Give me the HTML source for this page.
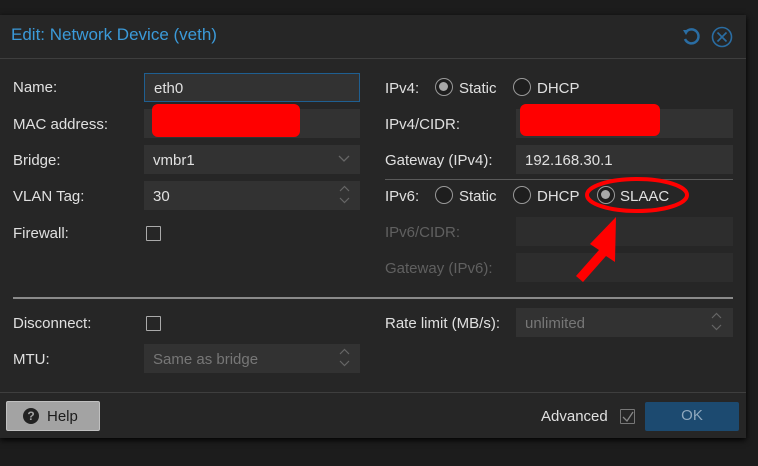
<!DOCTYPE html>
<html><head><style>
*{box-sizing:border-box;margin:0;padding:0}
body{width:758px;height:466px;background:#1c1c1c;font-family:"Liberation Sans",sans-serif;font-size:15px;color:#e0e0e0;position:relative;overflow:hidden}
.dlg{position:absolute;left:0;top:15px;width:746px;height:423px;background:#262626;box-shadow:0 2px 6px #000}
.hdr{position:absolute;left:0;top:0;width:746px;height:44px;border-bottom:1px solid #3e3e3e}
.title{position:absolute;left:11px;top:10px;font-size:17px;color:#3b9ad9}
.a{position:absolute}
.lbl{position:absolute;color:#e0e0e0;margin-top:1px}
.dis{color:#606060}
.f{position:absolute;background:#323232;height:29px;color:#e0e0e0;padding:7px 9px}
.cb{position:absolute;width:15px;height:15px;border:1.5px solid #aaa;border-radius:1px}
.rad{position:absolute;width:18px;height:18px;border-radius:50%;border:1.5px solid #999;background:#1e1e1e;margin-top:-1px}
.rad.on::after{content:"";position:absolute;left:3px;top:3px;width:9px;height:9px;border-radius:50%;background:#a8a8a8}
.red{position:absolute;background:#f00;border-radius:6px}
</style></head><body>
<div class="dlg">
 <div class="hdr"><div class="title">Edit: Network Device (veth)</div>
  <svg class="a" style="left:681px;top:12px" width="20" height="20" viewBox="0 0 20 20"><path d="M5 5 A7 7 0 1 1 4 12" fill="none" stroke="#2a6da3" stroke-width="2.5"/><path d="M2 3 L8 3 L5 8Z" fill="#2a6da3"/></svg>
  <svg class="a" style="left:711px;top:11px" width="22" height="22" viewBox="0 0 22 22"><circle cx="11" cy="11" r="9.5" fill="none" stroke="#2a6da3" stroke-width="1.6"/><path d="M6.5 6.5L15.5 15.5M15.5 6.5L6.5 15.5" stroke="#2a6da3" stroke-width="1.6"/></svg>
 </div>
</div>
<div class="lbl" style="left:13px;top:78px">Name:</div>
<div class="f" style="left:144px;top:73px;width:216px;border:1px solid #1f5f91;padding-top:6px">eth0</div>
<div class="lbl" style="left:13px;top:115px">MAC address:</div>
<div class="f" style="left:144px;top:109px;width:216px"></div>
<div class="red" style="left:152px;top:104px;width:148px;height:33px"></div>
<div class="lbl" style="left:13px;top:151px">Bridge:</div>
<div class="f" style="left:144px;top:145px;width:216px">vmbr1</div>
<svg class="a" style="left:338px;top:155px" width="12" height="8"><path d="M1 1L6 6L11 1" fill="none" stroke="#666" stroke-width="1.3"/></svg>
<div class="lbl" style="left:13px;top:187px">VLAN Tag:</div>
<div class="f" style="left:144px;top:181px;width:216px">30</div>
<svg class="a" style="left:339px;top:185px" width="11" height="20"><path d="M1 6L5.5 1.5L10 6M1 13L5.5 17.5L10 13" fill="none" stroke="#666" stroke-width="1.2"/></svg>
<div class="lbl" style="left:13px;top:224px">Firewall:</div>
<div class="cb" style="left:146px;top:226px"></div>

<div class="lbl" style="left:385px;top:79px">IPv4:</div>
<div class="rad on" style="left:435px;top:79px"></div><div class="lbl" style="left:459px;top:79px">Static</div>
<div class="rad" style="left:513px;top:79px"></div><div class="lbl" style="left:537px;top:79px">DHCP</div>
<div class="lbl" style="left:385px;top:115px">IPv4/CIDR:</div>
<div class="f" style="left:516px;top:109px;width:217px"></div>
<div class="red" style="left:520px;top:104px;width:140px;height:32px"></div>
<div class="lbl" style="left:385px;top:151px">Gateway (IPv4):</div>
<div class="f" style="left:516px;top:145px;width:217px">192.168.30.1</div>
<div class="a" style="left:385px;top:179px;width:348px;height:1px;background:#5a5a5a"></div>
<div class="lbl" style="left:385px;top:187px">IPv6:</div>
<div class="rad" style="left:435px;top:187px"></div><div class="lbl" style="left:459px;top:187px">Static</div>
<div class="rad" style="left:513px;top:187px"></div><div class="lbl" style="left:537px;top:187px">DHCP</div>
<div class="rad on" style="left:597px;top:187px"></div><div class="lbl" style="left:620px;top:187px">SLAAC</div>
<div class="lbl dis" style="left:385px;top:223px">IPv6/CIDR:</div>
<div class="f" style="left:516px;top:217px;width:217px;background:#2d2d2d"></div>
<div class="lbl dis" style="left:385px;top:259px">Gateway (IPv6):</div>
<div class="f" style="left:516px;top:253px;width:217px;background:#2d2d2d"></div>
<svg class="a" style="left:585px;top:175px" width="110" height="45"><ellipse cx="52" cy="20" rx="50" ry="16" fill="none" stroke="#f00" stroke-width="4"/></svg>
<svg class="a" style="left:570px;top:212px" width="50" height="75"><path d="M46 5 L45 50 L36 44 L13 70 L6 64 L29 38 L20 32Z" fill="#f00"/></svg>

<div class="a" style="left:13px;top:297px;width:720px;height:2px;background:#8a8a8a"></div>
<div class="lbl" style="left:13px;top:314px">Disconnect:</div>
<div class="cb" style="left:146px;top:316px"></div>
<div class="lbl" style="left:385px;top:314px">Rate limit (MB/s):</div>
<div class="f" style="left:516px;top:308px;width:217px;color:#777">unlimited</div>
<svg class="a" style="left:711px;top:312px" width="11" height="20"><path d="M1 6L5.5 1.5L10 6M1 13L5.5 17.5L10 13" fill="none" stroke="#666" stroke-width="1.2"/></svg>
<div class="lbl" style="left:13px;top:350px">MTU:</div>
<div class="f" style="left:144px;top:344px;width:216px;color:#777">Same as bridge</div>
<svg class="a" style="left:339px;top:348px" width="11" height="20"><path d="M1 6L5.5 1.5L10 6M1 13L5.5 17.5L10 13" fill="none" stroke="#666" stroke-width="1.2"/></svg>
<div class="a" style="left:0;top:392px;width:746px;height:1px;background:#3e3e3e"></div>
<div class="a" style="left:6px;top:401px;width:94px;height:30px;background:#a3a3a3;border:1px solid #c0c0c0;border-radius:2px"></div>
<div class="a" style="left:23px;top:408px;width:16px;height:16px;border-radius:50%;background:#222;color:#a3a3a3;font-size:12px;font-weight:bold;text-align:center;line-height:16px">?</div>
<div class="lbl" style="left:47px;top:407px;color:#1c1c1c">Help</div>
<div class="lbl" style="left:541px;top:407px">Advanced</div>
<div class="cb" style="left:620px;top:409px;border-color:#777"></div>
<svg class="a" style="left:621px;top:410px" width="14" height="14"><path d="M2 7L6 11L12 2" fill="none" stroke="#888" stroke-width="1.3"/></svg>
<div class="a" style="left:645px;top:402px;width:94px;height:29px;background:#1c4a70;border-radius:2px;color:#8fa8bd;text-align:center;line-height:28px">OK</div>
</body></html>
